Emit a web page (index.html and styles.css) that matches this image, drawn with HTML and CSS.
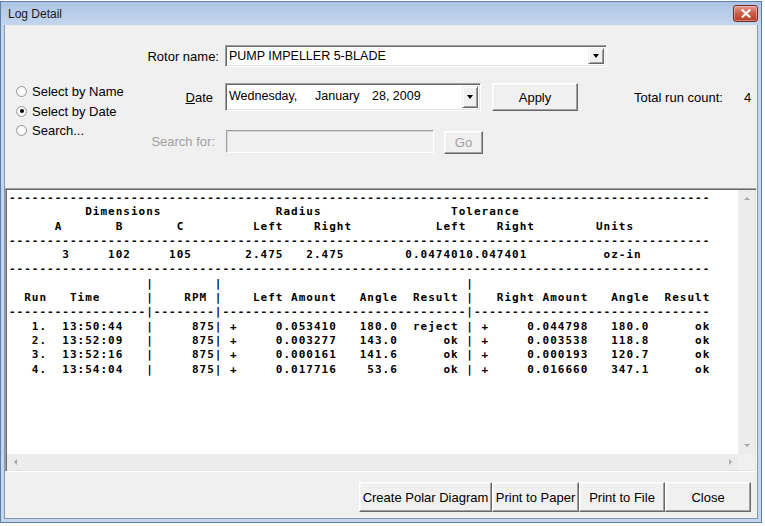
FILE: index.html
```html
<!DOCTYPE html>
<html>
<head>
<meta charset="utf-8">
<title>Log Detail</title>
<link rel="stylesheet" href="styles.css">
</head>
<body>
<div class="window">
  <div class="titlebar">
    <span class="title">Log Detail</span>
    <span class="close-btn"><svg width="10" height="9" viewBox="0 0 10 9"><path d="M1.5 1.2 L8.5 7.8 M8.5 1.2 L1.5 7.8" stroke="#fff" stroke-width="2.2" stroke-linecap="round"/></svg></span>
  </div>
  <div class="client">
    <div class="form">
      <div class="lbl lbl-rotor">Rotor name:</div>
      <div class="combo combo-rotor"><span class="combo-text">PUMP IMPELLER 5-BLADE</span><span class="drop"><i class="tri"></i></span></div>

      <div class="radios">
        <div class="radio"><span class="dot"></span>Select by Name</div>
        <div class="radio"><span class="dot on"></span>Select by Date</div>
        <div class="radio"><span class="dot"></span>Search...</div>
      </div>

      <div class="lbl lbl-date"><u>D</u>ate</div>
      <div class="row2">
        <div class="combo combo-date"><span class="combo-text date-text"><span class="d-day">Wednesday,</span><span class="d-month">January</span><span>28, 2009</span></span><span class="drop"><i class="tri"></i></span></div>
        <div class="btn apply">Apply</div>
        <div class="total">Total run count:</div>
        <div class="count">4</div>
      </div>

      <div class="lbl lbl-search">Search for:</div>
      <div class="row3">
        <div class="textbox"></div>
        <div class="btn go">Go</div>
      </div>
    </div>

    <div class="log">
      <div class="log-content"><pre>--------------------------------------------------------------------------------------------
          Dimensions               Radius                 Tolerance
      A       B       C         Left    Right           Left    Right        Units
--------------------------------------------------------------------------------------------
       3     102     105       2.475   2.475        0.0474010.047401          oz-in
--------------------------------------------------------------------------------------------
                  |        |                                |
  Run   Time      |    RPM |    Left Amount   Angle  Result |   Right Amount   Angle  Result
------------------|--------|--------------------------------|-------------------------------
   1.  13:50:44   |     875| +     0.053410   180.0  reject | +     0.044798   180.0      ok
   2.  13:52:09   |     875| +     0.003277   143.0      ok | +     0.003538   118.8      ok
   3.  13:52:16   |     875| +     0.000161   141.6      ok | +     0.000193   120.7      ok
   4.  13:54:04   |     875| +     0.017716    53.6      ok | +     0.016660   347.1      ok</pre></div>
      <div class="vscroll"><i class="arr up"></i><i class="arr down"></i></div>
      <div class="hscroll"><i class="arr left"></i><i class="arr right"></i></div>
      <div class="corner"></div>
    </div>

    <div class="buttons">
      <div class="btn b-polar">Create Polar Diagram</div>
      <div class="btn b-paper">Print to Paper</div>
      <div class="btn b-file">Print to File</div>
      <div class="btn b-close">Close</div>
    </div>
  </div>
</div>
</body>
</html>
```
FILE: styles.css
```css
* { box-sizing: border-box; }

body {
  margin: 0;
  background: #ffffff;
  font-family: "Liberation Sans", Arial, sans-serif;
  font-size: 13px;
  color: #000;
}

.window {
  margin-top: 1px;
  width: 762px;
  height: 522px;
  border: 1px solid #5b7fa6;
  background: #c3d6ed;
  display: flex;
  flex-direction: column;
}

.titlebar {
  height: 23px;
  flex: none;
  display: flex;
  align-items: center;
  justify-content: space-between;
  padding: 0 3px 0 7px;
  background: linear-gradient(#adc4e2, #b8cde8 50%, #c3d6ee);
}

.title {
  font-size: 12px;
  color: #1b1b1b;
}

.close-btn {
  width: 25px;
  height: 17px;
  border: 1px solid #6e2e26;
  border-radius: 3px;
  background: linear-gradient(#e49d90, #cc5a47 50%, #b93c28);
  box-shadow: inset 0 0 0 1px rgba(255, 255, 255, 0.35);
  display: flex;
  align-items: center;
  justify-content: center;
}

.client {
  flex: 1;
  margin: 0 3px 3px;
  background: #f0f0f0;
  border: 1px solid #8497ae;
  border-top: none;
  display: flex;
  flex-direction: column;
}

/* ---------- form ---------- */
.form {
  display: grid;
  grid-template-columns: 140px 68px 1fr;
  grid-template-rows: 22px 16px 28px 19px 23px;
  column-gap: 6px;
  padding-top: 20px;
}

.lbl {
  display: flex;
  align-items: center;
  justify-content: flex-end;
  white-space: nowrap;
  grid-column: 1 / 3;
}
.lbl-rotor { grid-row: 1; }
.lbl-date { grid-row: 3; padding-right: 6px; }
.lbl-search { grid-row: 5; padding-right: 4px; color: #a0a0a0; }

.radios {
  grid-column: 1;
  grid-row: 3 / 6;
  padding-left: 11px;
  margin-top: -1px;
}
.radio {
  height: 19.5px;
  display: flex;
  align-items: center;
  gap: 5px;
  white-space: nowrap;
}
.dot {
  width: 11px;
  height: 11px;
  border-radius: 50%;
  border: 1px solid #999a9b;
  background: radial-gradient(#ffffff 40%, #e4e4e4);
  display: flex;
  align-items: center;
  justify-content: center;
}
.dot.on::after {
  content: "";
  width: 4px;
  height: 4px;
  border-radius: 50%;
  background: #000;
}

.combo {
  display: flex;
  background: #fff;
  border: 1px solid;
  border-color: #a0a0a0 #ffffff #ffffff #a0a0a0;
  box-shadow: inset 1px 1px 0 #696969, inset -1px -1px 0 #e3e3e3;
  padding: 2px;
}
.combo-rotor {
  grid-column: 3;
  grid-row: 1;
  width: 382px;
}
.combo-text {
  flex: 1;
  display: flex;
  align-items: center;
  padding-left: 1px;
  font-size: 12.5px;
  white-space: nowrap;
}
.drop {
  width: 16px;
  background: #f0f0f0;
  border: 1px solid;
  border-color: #f0f0f0 #696969 #696969 #f0f0f0;
  box-shadow: inset 1px 1px 0 #ffffff, inset -1px -1px 0 #a0a0a0;
  display: flex;
  align-items: center;
  justify-content: center;
}
.tri {
  width: 0;
  height: 0;
  border-left: 3.5px solid transparent;
  border-right: 3.5px solid transparent;
  border-top: 4px solid #000;
}

.row2 {
  grid-column: 3;
  grid-row: 3;
  display: flex;
  align-items: center;
}
.combo-date {
  width: 256px;
  height: 28px;
}
.date-text { padding-bottom: 2px; }
.d-day { width: 86px; }
.d-month { width: 57px; }

.apply {
  margin-left: 11px;
  width: 86px;
  height: 28px;
}
.total {
  margin-left: 56px;
  width: 110px;
  white-space: nowrap;
}

.row3 {
  grid-column: 3;
  grid-row: 5;
  display: flex;
  align-items: flex-start;
}
.textbox {
  margin-left: 1px;
  width: 208px;
  height: 23px;
  background: #f0f0f0;
  border: 1px solid;
  border-color: #a0a0a0 #ffffff #ffffff #a0a0a0;
  box-shadow: inset 1px 1px 0 #d8d8d8;
}
.go {
  margin-left: 10px;
  margin-top: 1px;
  width: 39px;
  height: 23px;
  color: #a0a0a0;
}

.btn {
  display: flex;
  align-items: center;
  justify-content: center;
  background: #f0f0f0;
  border: 1px solid;
  border-color: #ffffff #696969 #696969 #ffffff;
  box-shadow: inset -1px -1px 0 #a0a0a0, inset 1px 1px 0 #f7f7f7;
  white-space: nowrap;
}

/* ---------- log text area ---------- */
.log {
  margin-top: 35px;
  height: 284px;
  display: grid;
  grid-template-columns: 1fr 17px;
  grid-template-rows: 1fr 16px;
  border: 1px solid;
  border-color: #a0a0a0 #ffffff #ffffff #a0a0a0;
  box-shadow: inset 1px 1px 0 #696969, inset -1px -1px 0 #e3e3e3;
  padding: 1px;
}
.log-content {
  background: #fff;
  overflow: hidden;
}
.log-content pre {
  margin: 0;
  padding: 1px 0 0 2px;
  font-family: "DejaVu Sans Mono", monospace;
  font-weight: bold;
  font-size: 11px;
  letter-spacing: 1px;
  line-height: 14.3px;
  color: #000;
}
.vscroll {
  background: #ececec;
  display: flex;
  flex-direction: column;
  justify-content: space-between;
  align-items: center;
  padding: 7px 0;
}
.hscroll {
  background: #ececec;
  display: flex;
  justify-content: space-between;
  align-items: center;
  padding: 0 6px 0 7px;
}
.corner { background: #f0f0f0; }

.arr {
  width: 0;
  height: 0;
}
.arr.up {
  border-left: 3px solid transparent;
  border-right: 3px solid transparent;
  border-bottom: 3px solid #a8a8a8;
}
.arr.down {
  border-left: 3px solid transparent;
  border-right: 3px solid transparent;
  border-top: 3px solid #a8a8a8;
}
.arr.left {
  border-top: 3px solid transparent;
  border-bottom: 3px solid transparent;
  border-right: 3px solid #a8a8a8;
}
.arr.right {
  border-top: 3px solid transparent;
  border-bottom: 3px solid transparent;
  border-left: 3px solid #a8a8a8;
}

/* ---------- bottom buttons ---------- */
.buttons {
  margin-top: 10px;
  height: 30px;
  display: flex;
  justify-content: flex-end;
  padding-right: 6px;
}
.b-polar { width: 133px; }
.b-paper { width: 87px; }
.b-file { width: 86px; }
.b-close { width: 86px; }
```
